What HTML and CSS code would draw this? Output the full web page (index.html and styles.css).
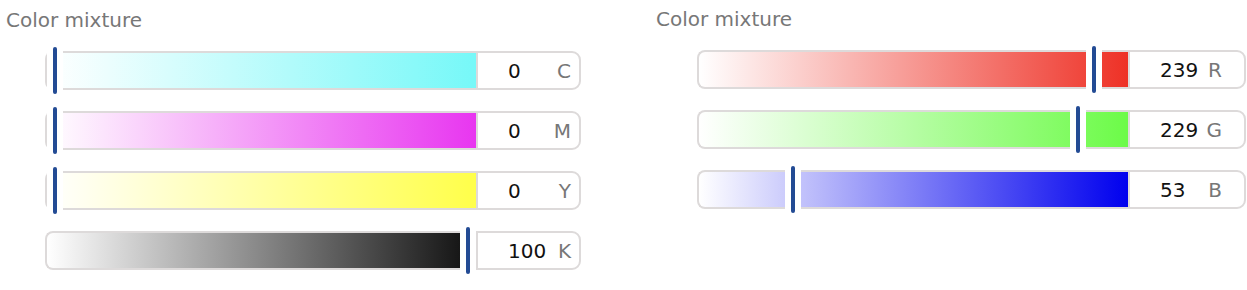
FILE: index.html
```html
<!DOCTYPE html>
<html lang="en">
<head>
    <meta charset="UTF-8">
    <title>Color mixture</title>
    <link rel="stylesheet" href="styles.css">
</head>
<body>
    <div class="paneles">
        <div class="panel panel-cmyk">
            <h2 class="titulo">Color mixture</h2>

            <div class="fila">
                <div class="pista pista-c">
                    <div class="tirador" style="--pos: 0"></div>
                </div>
                <div class="campo"><span class="valor">0</span><span class="letra">C</span></div>
            </div>
            <div class="fila">
                <div class="pista pista-m">
                    <div class="tirador" style="--pos: 0"></div>
                </div>
                <div class="campo"><span class="valor">0</span><span class="letra">M</span></div>
            </div>
            <div class="fila">
                <div class="pista pista-y">
                    <div class="tirador" style="--pos: 0"></div>
                </div>
                <div class="campo"><span class="valor">0</span><span class="letra">Y</span></div>
            </div>
            <div class="fila">
                <div class="pista pista-k">
                    <div class="tirador" style="--pos: 1"></div>
                </div>
                <div class="campo"><span class="valor">100</span><span class="letra">K</span></div>
            </div>
        </div>

        <div class="panel panel-rgb">
            <h2 class="titulo">Color mixture</h2>

            <div class="fila">
                <div class="pista pista-r">
                    <div class="tirador" style="--pos: 0.9373"></div>
                </div>
                <div class="campo"><span class="valor">239</span><span class="letra">R</span></div>
            </div>
            <div class="fila">
                <div class="pista pista-g">
                    <div class="tirador" style="--pos: 0.898"></div>
                </div>
                <div class="campo"><span class="valor">229</span><span class="letra">G</span></div>
            </div>
            <div class="fila">
                <div class="pista pista-b">
                    <div class="tirador" style="--pos: 0.2078"></div>
                </div>
                <div class="campo"><span class="valor">53</span><span class="letra">B</span></div>
            </div>
        </div>
    </div>
</body>
</html>
```

FILE: styles.css
```css
body {
    font-family: "DejaVu Sans", Verdana, sans-serif;
    margin: 0;
    background-color: white;
}
.paneles {
    display: grid;
    grid-template-columns: 650px 1fr;
}
.panel {
    padding-left: 6px;
}
.titulo {
    font-size: 20px;
    font-weight: normal;
    line-height: 24px;
    color: #777;
    margin: 8px 0 19px 0;
}
.panel-rgb .titulo {
    margin-top: 7px;
}
.fila {
    display: flex;
    height: 39px;
    margin: 0 0 21px 39px;
}
.panel-rgb .fila {
    margin-left: 41px;
}
.pista {
    position: relative;
    width: 431px;
    box-sizing: border-box;
    border: 2px solid #dddada;
    border-right: none;
    border-radius: 8px 0 0 8px;
}
.pista-c { background: linear-gradient(to right, #fff, #76f8f8); }
.pista-m { background: linear-gradient(to right, #fff, #e836f0); }
.pista-y { background: linear-gradient(to right, #fff, #ffff4a); }
.pista-k { background: linear-gradient(to right, #fff, #0e0e0e); }
.pista-r { background: linear-gradient(to right, #fff, #ee3126); }
.pista-g { background: linear-gradient(to right, #fff, #6cfb48); }
.pista-b { background: linear-gradient(to right, #fff, #0000ee); }

/* hueco blanco con la barra azul encima */
.tirador {
    position: absolute;
    top: -2px;
    bottom: -2px;
    left: calc((100% - 16px) * var(--pos));
    width: 16px;
    background-color: white;
}
.tirador::after {
    content: "";
    position: absolute;
    top: -4px;
    bottom: -4px;
    left: 6px;
    width: 4px;
    border-radius: 2px;
    background-color: #234b94;
}
.campo {
    display: flex;
    align-items: center;
    justify-content: space-between;
    width: 105px;
    box-sizing: border-box;
    border: 2px solid #dddada;
    border-radius: 0 9px 9px 0;
    padding: 0 8px 0 30px;
    background-color: white;
}
.panel-rgb .campo {
    width: 118px;
    padding-right: 22px;
}
.valor {
    font-size: 20px;
    color: #111;
}
.letra {
    font-size: 20px;
    color: #777;
}
```
